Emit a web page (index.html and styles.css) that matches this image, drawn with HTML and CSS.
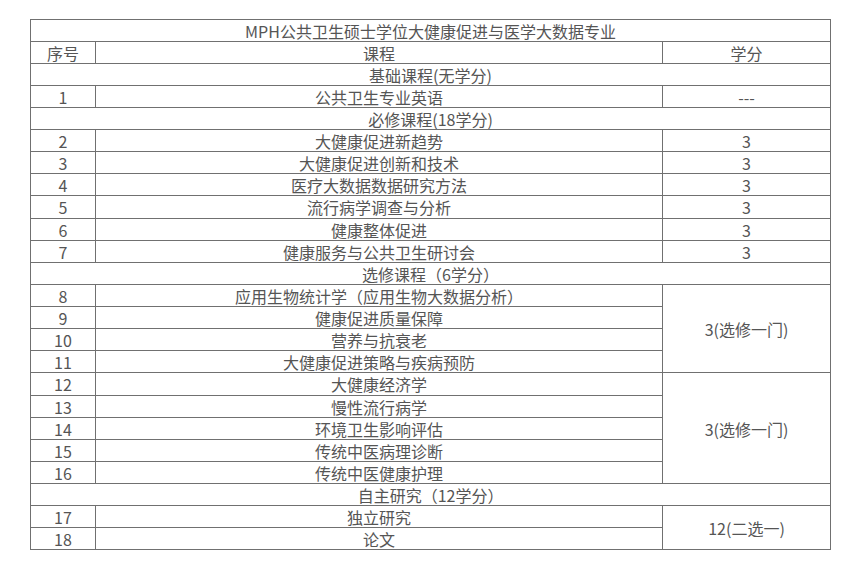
FILE: index.html
```html
<!DOCTYPE html>
<html lang="zh-CN">
<head>
<meta charset="utf-8">
<title>MPH公共卫生硕士学位大健康促进与医学大数据专业</title>
<link rel="stylesheet" href="styles.css">
</head>
<body>
<div class="wrap">
<table class="course-table">
  <colgroup>
    <col class="c-no">
    <col class="c-name">
    <col class="c-credit">
  </colgroup>
  <tbody>
    <tr><td colspan="3">MPH公共卫生硕士学位大健康促进与医学大数据专业</td></tr>
    <tr><td>序号</td><td>课程</td><td>学分</td></tr>
    <tr><td colspan="3">基础课程(无学分)</td></tr>
    <tr><td>1</td><td>公共卫生专业英语</td><td>---</td></tr>
    <tr><td colspan="3">必修课程(18学分)</td></tr>
    <tr><td>2</td><td>大健康促进新趋势</td><td>3</td></tr>
    <tr><td>3</td><td>大健康促进创新和技术</td><td>3</td></tr>
    <tr><td>4</td><td>医疗大数据数据研究方法</td><td>3</td></tr>
    <tr class="tall"><td>5</td><td>流行病学调查与分析</td><td>3</td></tr>
    <tr><td>6</td><td>健康整体促进</td><td>3</td></tr>
    <tr><td>7</td><td>健康服务与公共卫生研讨会</td><td>3</td></tr>
    <tr><td colspan="3">选修课程（6学分）</td></tr>
    <tr><td>8</td><td>应用生物统计学（应用生物大数据分析）</td><td rowspan="4">3(选修一门)</td></tr>
    <tr><td>9</td><td>健康促进质量保障</td></tr>
    <tr><td>10</td><td>营养与抗衰老</td></tr>
    <tr><td>11</td><td>大健康促进策略与疾病预防</td></tr>
    <tr class="tall"><td>12</td><td>大健康经济学</td><td rowspan="5" class="low">3(选修一门)</td></tr>
    <tr><td>13</td><td>慢性流行病学</td></tr>
    <tr><td>14</td><td>环境卫生影响评估</td></tr>
    <tr><td>15</td><td>传统中医病理诊断</td></tr>
    <tr><td>16</td><td>传统中医健康护理</td></tr>
    <tr><td colspan="3">自主研究（12学分）</td></tr>
    <tr><td>17</td><td>独立研究</td><td rowspan="2">12(二选一)</td></tr>
    <tr><td>18</td><td>论文</td></tr>
  </tbody>
</table>
</div>
</body>
</html>
```
FILE: styles.css
```css
html, body {
  margin: 0;
  padding: 0;
  background: #fff;
}

.wrap {
  padding: 19px 0 0 30px;
}

.course-table {
  border-collapse: collapse;
  width: 800px;
  table-layout: fixed;
  font-family: "Noto Sans CJK SC", "Noto Sans", sans-serif;
  font-size: 16px;
  color: #555;
}

.c-no { width: 65px; }
.c-name { width: 567px; }
.c-credit { width: 168px; }

.course-table tr {
  height: 22px;
}

.course-table tr.tall {
  height: 23px;
}

.course-table td {
  border: 1px solid #707070;
  padding: 0;
  height: 21px;
  line-height: 20px;
  text-align: center;
  vertical-align: middle;
  white-space: nowrap;
}

.course-table tr.tall td {
  height: 22px;
}

.course-table td.low {
  vertical-align: top;
  padding-top: 46px;
}
```
